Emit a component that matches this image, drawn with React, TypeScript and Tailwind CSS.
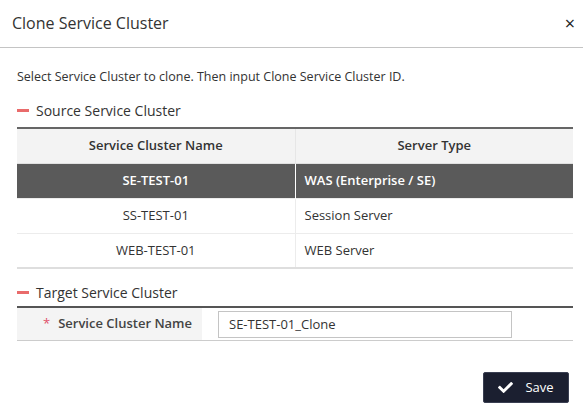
import React from 'react';
import { FaCheck } from 'react-icons/fa';

interface Row {
  name: string;
  type: string;
}

const rows: Row[] = [
  { name: 'SE-TEST-01', type: 'WAS (Enterprise / SE)' },
  { name: 'SS-TEST-01', type: 'Session Server' },
  { name: 'WEB-TEST-01', type: 'WEB Server' },
];

const SectionTitle: React.FC<{ text: string }> = ({ text }) => (
  <div className="flex items-center h-5 text-[14px] text-[#333]">
    <span className="w-[12px] h-[3px] bg-[#e96b6b] mr-[7px]" />
    {text}
  </div>
);

const App: React.FC = () => {
  const selected = 0;

  return (
    <div
      className="w-[583px] h-[413px] bg-white text-[#333]"
      style={{ fontFamily: '"Open Sans", "Noto Sans CJK KR", sans-serif' }}
    >
      <div className="h-[48px] border-b border-[#c4c4c4] flex items-center justify-between pl-[12px] pr-[8px]">
        <h2 className="text-[16px] text-[#333] -mt-[2px]">Clone Service Cluster</h2>
        <button className="text-[18px] leading-none text-[#222] -mt-[2px]">×</button>
      </div>

      <div className="pl-[17px] pr-[10px] pt-[19px]">
        <p className="h-5 text-[12.5px] leading-5">
          Select Service Cluster to clone. Then input Clone Service Cluster ID.
        </p>

        <div className="mt-[13px]">
          <SectionTitle text="Source Service Cluster" />
        </div>

        <table className="mt-[7px] w-full border-collapse text-[13px]">
          <thead>
            <tr className="bg-[#f3f3f3] border-t-2 border-[#666] border-b border-b-[#e0e0e0]">
              <th className="h-[35px] w-[278px] font-semibold text-center">Service Cluster Name</th>
              <th className="h-[35px] font-semibold text-center border-l border-[#e6e6e6]">Server Type</th>
            </tr>
          </thead>
          <tbody>
            {rows.map((r, i) => {
              const active = i === selected;
              const last = i === rows.length - 1;
              return (
                <tr
                  key={r.name}
                  className={
                    (active ? 'bg-[#5a5a5a] text-white font-semibold ' : 'bg-white ') +
                    (last ? 'border-b-2 border-[#dedede]' : 'border-b border-[#ececec]')
                  }
                >
                  <td className="h-[35px] text-center">{r.name}</td>
                  <td
                    className={
                      'h-[35px] pl-[9px] text-left border-l ' +
                      (active ? 'border-white' : 'border-[#ececec]')
                    }
                  >
                    {r.type}
                  </td>
                </tr>
              );
            })}
          </tbody>
        </table>

        <div className="mt-[13px]">
          <SectionTitle text="Target Service Cluster" />
        </div>

        <div className="mt-[4px] border-t-2 border-[#555] border-b border-b-[#cccccc] flex h-[35px]">
          <div className="w-[185px] bg-[#f4f4f4] flex items-center pl-[26px] text-[13px] font-semibold text-[#444]">
            <span className="text-[#e0506a] mr-[8px] font-normal">*</span>
            Service Cluster Name
          </div>
          <div className="flex items-center pl-[16px]">
            <input
              className="w-[294px] h-[27px] border border-[#c4c4c4] px-[10px] text-[13px] text-[#333] outline-none"
              defaultValue="SE-TEST-01_Clone"
            />
          </div>
        </div>

        <div className="flex justify-end mt-[31px] pr-[4px]">
          <button className="w-[86px] h-[31px] bg-[#1b1f30] border border-[#3a3f52] rounded-[2px] text-white text-[13px] flex items-center justify-center gap-[12px]">
            <FaCheck className="w-[15px] h-[15px]" />
            Save
          </button>
        </div>
      </div>
    </div>
  );
};

export default App;
